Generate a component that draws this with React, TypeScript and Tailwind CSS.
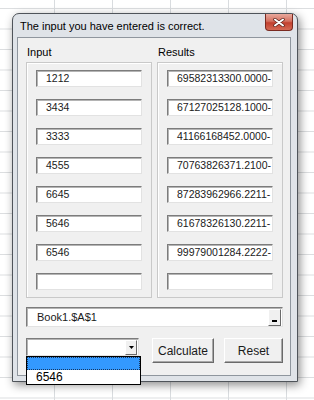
import React from 'react'

const inputs = ['1212', '3434', '3333', '4555', '6645', '5646', '6546', '']
const results = [
    '69582313300.0000-',
    '67127025128.1000-',
    '41166168452.0000-',
    '70763826371.2100-',
    '87283962966.2211-',
    '61678326130.2211-',
    '99979001284.2222-',
    '',
]

const sans = { fontFamily: '"Liberation Sans", Arial, sans-serif' }

/** Sunken VBA-style text box */
const TextBox = ({ value }: { value: string }) => (
    <div className="flex h-[17px] w-[106px] items-center overflow-hidden whitespace-nowrap border border-t-[#7c7c7c] border-l-[#7c7c7c] border-b-[#e2e2e2] border-r-[#e2e2e2] bg-white pl-[9px] text-[10.5px] leading-none text-[#1a1a1a] shadow-[inset_1px_1px_0_#b4b4b4]">
        {value}
    </div>
)

/** A column: caption above an etched frame full of text boxes */
const Column = ({ title, values }: { title: string; values: string[] }) => (
    <div className="flex w-[126px] flex-col">
        <div className="h-[13px] pl-[1px] text-[11px] leading-[13px] text-black">{title}</div>
        <div className="mt-[3px] flex h-[236px] flex-col gap-[12px] border border-[#c9c9c9] px-[9px] pt-[7px] shadow-[inset_1px_1px_0_#ffffff]">
            {values.map((v, i) => (
                <TextBox key={i} value={v} />
            ))}
        </div>
    </div>
)

const RaisedButton = ({ label, width }: { label: string; width: string }) => (
    <div
        className={`flex h-[25px] ${width} items-center justify-center border border-t-white border-l-white border-b-[#6a6a6a] border-r-[#6a6a6a] bg-[#f0f0f0] text-[12px] text-[#1a1a1a] shadow-[inset_-1px_-1px_0_#a8a8a8]`}
    >
        {label}
    </div>
)

const CloseButton = () => (
    <div className="mr-[4px] ml-auto flex h-[17px] w-[28px] items-center justify-center rounded-b-[4px] border border-t-0 border-[#7a2a20] bg-[linear-gradient(to_bottom,#e8a99d_0%,#d4705f_45%,#c2402e_55%,#d56a55_100%)]">
        <svg width="12" height="9" viewBox="0 0 12 9">
            <path d="M2 1.5 L10 7.5 M10 1.5 L2 7.5" stroke="#5a2018" strokeWidth="3.4" strokeLinecap="round" />
            <path d="M2 1.5 L10 7.5 M10 1.5 L2 7.5" stroke="#ffffff" strokeWidth="2" strokeLinecap="round" />
        </svg>
    </div>
)

export default function App() {
    return (
        <div
            className="h-[400px] w-[314px] overflow-hidden bg-white bg-[linear-gradient(to_right,#d9dcdf_1px,transparent_1px),linear-gradient(to_bottom,#dcdee0_1px,transparent_1px)] pl-[12px] pt-[13px] [background-position:54px_8px] [background-size:58px_20.5px]"
            style={sans}
        >
            {/* UserForm window */}
            <div className="flex h-[369px] w-[286px] flex-col rounded-t-[7px] border border-[#4f545a] bg-[#dfe3e8] shadow-[2px_3px_10px_rgba(0,0,0,0.45)]">
                {/* Title bar */}
                <div className="flex h-[23px] items-start">
                    <span className="pl-[7px] pt-[6px] text-[11px] leading-[13px] text-black">
                        The input you have entered is correct.
                    </span>
                    <CloseButton />
                </div>

                {/* Client area */}
                <div className="mb-[5px] ml-[4px] flex w-[274px] flex-1 flex-col border border-[#8f969e] bg-[#f0f0f0] pl-[8px] pr-[7px] pt-[8px]">
                    <div className="flex gap-[5px]">
                        <Column title="Input" values={inputs} />
                        <Column title="Results" values={results} />
                    </div>

                    {/* RefEdit */}
                    <div className="mt-[9px] flex h-[20px] items-center border border-t-[#7c7c7c] border-l-[#7c7c7c] border-b-[#e2e2e2] border-r-[#e2e2e2] bg-white pl-[10px] pr-[1px] shadow-[inset_1px_1px_0_#b4b4b4]">
                        <span className="text-[11px] text-[#1a1a1a]">Book1.$A$1</span>
                        <div className="ml-auto flex h-[17px] w-[13px] items-end justify-center border border-t-white border-l-white border-b-[#6a6a6a] border-r-[#6a6a6a] bg-[#f0f0f0] pb-[3px]">
                            <div className="h-[2px] w-[5px] bg-black" />
                        </div>
                    </div>

                    {/* Combo + buttons */}
                    <div className="mt-[11px] flex items-start">
                        <div className="relative">
                            <div className="flex h-[18px] w-[113px] items-center border border-t-[#7c7c7c] border-l-[#7c7c7c] border-b-[#e2e2e2] border-r-[#e2e2e2] bg-white pr-[1px] shadow-[inset_1px_1px_0_#b4b4b4]">
                                <div className="ml-auto flex h-[15px] w-[12px] items-center justify-center border border-t-white border-l-white border-b-[#6a6a6a] border-r-[#6a6a6a] bg-[#f0f0f0]">
                                    <svg width="5" height="3" viewBox="0 0 5 3">
                                        <path d="M0 0 H5 L2.5 3 Z" fill="#000" />
                                    </svg>
                                </div>
                            </div>
                            {/* open dropdown list */}
                            <div className="absolute left-0 top-[18px] z-10 flex w-[115px] flex-col border border-black bg-white">
                                <div className="h-[13px] border border-dotted border-[#16365e] bg-[#3399ff]" />
                                <div className="flex h-[14px] items-center pl-[9px] text-[12px] text-black">6546</div>
                            </div>
                        </div>
                        <div className="ml-[13px]">
                            <RaisedButton label="Calculate" width="w-[62px]" />
                        </div>
                        <div className="ml-[10px]">
                            <RaisedButton label="Reset" width="w-[59px]" />
                        </div>
                    </div>
                </div>
            </div>
        </div>
    )
}
